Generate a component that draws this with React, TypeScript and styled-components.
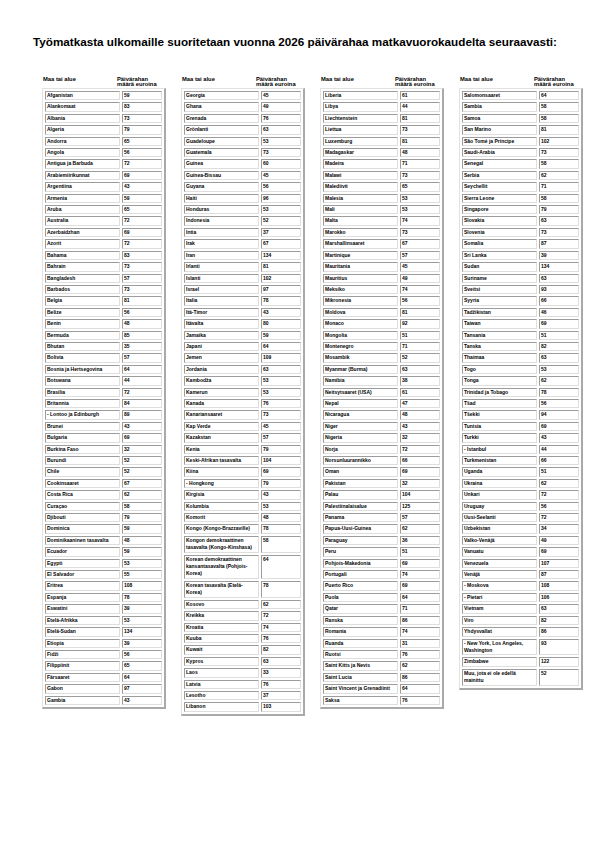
import React from "react";
import styled, { createGlobalStyle } from "styled-components";

type Row = [string, number];

const COLUMNS: Row[][] = [
  [
    ["Afganistan", 59],
    ["Alankomaat", 83],
    ["Albania", 73],
    ["Algeria", 79],
    ["Andorra", 65],
    ["Angola", 56],
    ["Antigua ja Barbuda", 72],
    ["Arabiemiirikunnat", 69],
    ["Argentiina", 43],
    ["Armenia", 59],
    ["Aruba", 65],
    ["Australia", 72],
    ["Azerbaidzhan", 69],
    ["Azorit", 72],
    ["Bahama", 83],
    ["Bahrain", 73],
    ["Bangladesh", 57],
    ["Barbados", 73],
    ["Belgia", 81],
    ["Belize", 56],
    ["Benin", 48],
    ["Bermuda", 85],
    ["Bhutan", 35],
    ["Bolivia", 57],
    ["Bosnia ja Hertsegovina", 64],
    ["Botswana", 44],
    ["Brasilia", 72],
    ["Britannia", 84],
    ["- Lontoo ja Edinburgh", 89],
    ["Brunei", 43],
    ["Bulgaria", 69],
    ["Burkina Faso", 32],
    ["Burundi", 52],
    ["Chile", 52],
    ["Cookinsaaret", 67],
    ["Costa Rica", 62],
    ["Curaçao", 58],
    ["Djibouti", 79],
    ["Dominica", 59],
    ["Dominikaaninen tasavalta", 48],
    ["Ecuador", 59],
    ["Egypti", 53],
    ["El Salvador", 55],
    ["Eritrea", 108],
    ["Espanja", 78],
    ["Eswatini", 39],
    ["Etelä-Afrikka", 53],
    ["Etelä-Sudan", 134],
    ["Etiopia", 39],
    ["Fidži", 56],
    ["Filippiinit", 65],
    ["Färsaaret", 64],
    ["Gabon", 97],
    ["Gambia", 43],
  ],
  [
    ["Georgia", 45],
    ["Ghana", 49],
    ["Grenada", 76],
    ["Grönlanti", 63],
    ["Guadeloupe", 53],
    ["Guatemala", 73],
    ["Guinea", 60],
    ["Guinea-Bissau", 45],
    ["Guyana", 56],
    ["Haiti", 96],
    ["Honduras", 53],
    ["Indonesia", 52],
    ["Intia", 37],
    ["Irak", 67],
    ["Iran", 134],
    ["Irlanti", 81],
    ["Islanti", 102],
    ["Israel", 97],
    ["Italia", 78],
    ["Itä-Timor", 43],
    ["Itävalta", 80],
    ["Jamaika", 59],
    ["Japani", 64],
    ["Jemen", 109],
    ["Jordania", 63],
    ["Kambodža", 53],
    ["Kamerun", 53],
    ["Kanada", 76],
    ["Kanariansaaret", 73],
    ["Kap Verde", 45],
    ["Kazakstan", 57],
    ["Kenia", 79],
    ["Keski-Afrikan tasavalta", 104],
    ["Kiina", 69],
    ["- Hongkong", 79],
    ["Kirgisia", 43],
    ["Kolumbia", 53],
    ["Komorit", 48],
    ["Kongo (Kongo-Brazzaville)", 78],
    ["Kongon demokraattinen\ntasavalta (Kongo-Kinshasa)", 58],
    ["Korean demokraattinen\nkansantasavalta (Pohjois-\nKorea)", 64],
    ["Korean tasavalta (Etelä-\nKorea)", 78],
    ["Kosovo", 62],
    ["Kreikka", 72],
    ["Kroatia", 74],
    ["Kuuba", 76],
    ["Kuwait", 82],
    ["Kypros", 63],
    ["Laos", 33],
    ["Latvia", 76],
    ["Lesotho", 37],
    ["Libanon", 103],
  ],
  [
    ["Liberia", 61],
    ["Libya", 44],
    ["Liechtenstein", 81],
    ["Liettua", 73],
    ["Luxemburg", 81],
    ["Madagaskar", 48],
    ["Madeira", 71],
    ["Malawi", 73],
    ["Malediivit", 65],
    ["Malesia", 53],
    ["Mali", 53],
    ["Malta", 74],
    ["Marokko", 73],
    ["Marshallinsaaret", 67],
    ["Martinique", 57],
    ["Mauritania", 45],
    ["Mauritius", 49],
    ["Meksiko", 74],
    ["Mikronesia", 56],
    ["Moldova", 81],
    ["Monaco", 92],
    ["Mongolia", 51],
    ["Montenegro", 71],
    ["Mosambik", 52],
    ["Myanmar (Burma)", 63],
    ["Namibia", 38],
    ["Neitsytsaaret (USA)", 61],
    ["Nepal", 47],
    ["Nicaragua", 48],
    ["Niger", 43],
    ["Nigeria", 32],
    ["Norja", 72],
    ["Norsunluurannikko", 66],
    ["Oman", 69],
    ["Pakistan", 32],
    ["Palau", 104],
    ["Palestiinalaisalue", 125],
    ["Panama", 57],
    ["Papua-Uusi-Guinea", 62],
    ["Paraguay", 36],
    ["Peru", 51],
    ["Pohjois-Makedonia", 69],
    ["Portugali", 74],
    ["Puerto Rico", 69],
    ["Puola", 64],
    ["Qatar", 71],
    ["Ranska", 86],
    ["Romania", 74],
    ["Ruanda", 31],
    ["Ruotsi", 76],
    ["Saint Kitts ja Nevis", 62],
    ["Saint Lucia", 86],
    ["Saint Vincent ja Grenadiinit", 64],
    ["Saksa", 76],
  ],
  [
    ["Salomonsaaret", 64],
    ["Sambia", 58],
    ["Samoa", 58],
    ["San Marino", 81],
    ["São Tomé ja Príncipe", 102],
    ["Saudi-Arabia", 73],
    ["Senegal", 58],
    ["Serbia", 62],
    ["Seychellit", 71],
    ["Sierra Leone", 58],
    ["Singapore", 79],
    ["Slovakia", 63],
    ["Slovenia", 73],
    ["Somalia", 87],
    ["Sri Lanka", 39],
    ["Sudan", 134],
    ["Suriname", 63],
    ["Sveitsi", 93],
    ["Syyria", 66],
    ["Tadžikistan", 46],
    ["Taiwan", 69],
    ["Tansania", 51],
    ["Tanska", 82],
    ["Thaimaa", 63],
    ["Togo", 53],
    ["Tonga", 62],
    ["Trinidad ja Tobago", 78],
    ["Tšad", 56],
    ["Tšekki", 94],
    ["Tunisia", 69],
    ["Turkki", 43],
    ["- Istanbul", 44],
    ["Turkmenistan", 66],
    ["Uganda", 51],
    ["Ukraina", 62],
    ["Unkari", 72],
    ["Uruguay", 56],
    ["Uusi-Seelanti", 72],
    ["Uzbekistan", 34],
    ["Valko-Venäjä", 49],
    ["Vanuatu", 69],
    ["Venezuela", 107],
    ["Venäjä", 87],
    ["- Moskova", 108],
    ["- Pietari", 106],
    ["Vietnam", 63],
    ["Viro", 82],
    ["Yhdysvallat", 86],
    ["- New York, Los Angeles,\nWashington", 93],
    ["Zimbabwe", 122],
    ["Muu, jota ei ole edellä\nmainittu", 52],
  ],
];

const GlobalStyle = createGlobalStyle`
  html, body {
    margin: 0;
    padding: 0;
    background: #fff;
  }
  body {
    font-family: "Liberation Sans", Arial, sans-serif;
    color: #000;
  }
`;

const Page = styled.div`
  width: 595px;
  padding: 35px 0 0 33px;
  box-sizing: border-box;
`;

const Title = styled.h1`
  margin: 0;
  font-size: 11.7px;
  line-height: 13px;
  font-weight: bold;
  white-space: nowrap;
`;

const Columns = styled.div`
  display: grid;
  grid-template-columns: repeat(4, 124px);
  column-gap: 15px;
  align-items: start;
  margin: 29px 0 0 9px;
`;

const Column = styled.section`
  display: flex;
  flex-direction: column;
`;

const Head = styled.div`
  display: flex;
  font-size: 5.8px;
  line-height: 5px;
  font-weight: bold;
  padding-left: 1px;
  height: 11px;
`;

const HeadName = styled.div`
  width: 74px;
  white-space: nowrap;
`;

const HeadValue = styled.div`
  white-space: nowrap;
`;

const Table = styled.table`
  width: 124px;
  table-layout: fixed;
  border-collapse: separate;
  border-spacing: 2px;
  border-style: solid;
  border-width: 1px 2px 2px 1px;
  border-color: #e2e2e2 #a9a9a9 #a9a9a9 #e2e2e2;
  font-size: 5px;
  line-height: 7.4px;
  font-weight: bold;
`;

const Cell = styled.td<{ $w?: number }>`
  ${(p) => (p.$w ? `width: ${p.$w}px;` : "")}
  padding: 0 1px;
  vertical-align: top;
  white-space: nowrap;
  overflow: hidden;
  border: 1px solid;
  border-color: #9c9c9c #dedede #dedede #9c9c9c;
`;

const NameCell = ({ text }: { text: string }) => {
  const lines = text.split("\n");
  return (
    <Cell $w={71}>
      {lines.map((l, i) => (
        <React.Fragment key={i}>
          {i > 0 && <br />}
          {l}
        </React.Fragment>
      ))}
    </Cell>
  );
};

const App = () => {
  return (
    <Page>
      <GlobalStyle />
      <Title>
        Työmatkasta ulkomaille suoritetaan vuonna 2026 päivärahaa
        matkavuorokaudelta seuraavasti:
      </Title>
      <Columns>
        {COLUMNS.map((rows, ci) => (
          <Column key={ci}>
            <Head>
              <HeadName>Maa tai alue</HeadName>
              <HeadValue>
                Päivärahan
                <br />
                määrä euroina
              </HeadValue>
            </Head>
            <Table>
              <tbody>
                {rows.map(([name, value]) => (
                  <tr key={name}>
                    <NameCell text={name} />
                    <Cell>{value}</Cell>
                  </tr>
                ))}
              </tbody>
            </Table>
          </Column>
        ))}
      </Columns>
    </Page>
  );
};

export default App;
